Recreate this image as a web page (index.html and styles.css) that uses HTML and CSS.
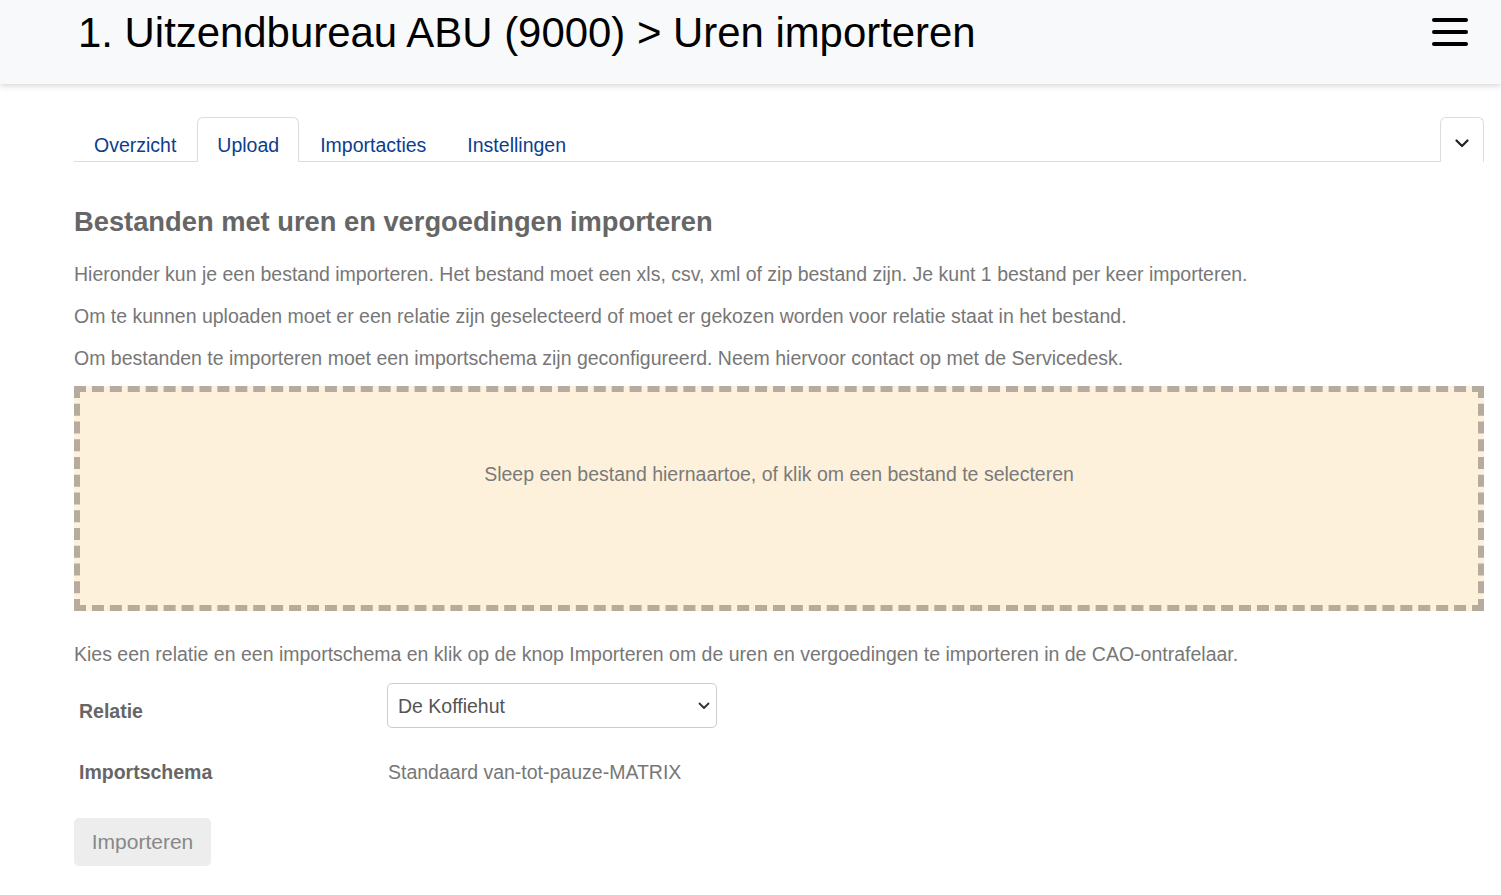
FILE: index.html
```html
<!DOCTYPE html>
<html>
<head>
    <title>Uren importeren</title>
    <link rel="stylesheet" href="styles.css">
</head>
<body>
    <header class="topbar">
        <h1 class="page-title">1. Uitzendbureau ABU (9000) &gt; Uren importeren</h1>
        <button class="menu-toggle" aria-label="Menu">
            <span></span><span></span><span></span>
        </button>
    </header>

    <main class="content">
        <nav class="tabs">
            <ul class="tab-list">
                <li class="tab"><a href="#">Overzicht</a></li>
                <li class="tab active"><a href="#">Upload</a></li>
                <li class="tab"><a href="#">Importacties</a></li>
                <li class="tab"><a href="#">Instellingen</a></li>
            </ul>
            <button class="tab-more" aria-label="Meer">
                <svg width="14" height="9" viewBox="0 0 14 9"><path d="M1.5 1.5 L7 7 L12.5 1.5" fill="none" stroke="#222" stroke-width="2.2" stroke-linecap="round" stroke-linejoin="round"/></svg>
            </button>
        </nav>

        <h2 class="section-title">Bestanden met uren en vergoedingen importeren</h2>

        <p>Hieronder kun je een bestand importeren. Het bestand moet een xls, csv, xml of zip bestand zijn. Je kunt 1 bestand per keer importeren.</p>
        <p>Om te kunnen uploaden moet er een relatie zijn geselecteerd of moet er gekozen worden voor relatie staat in het bestand.</p>
        <p class="last">Om bestanden te importeren moet een importschema zijn geconfigureerd. Neem hiervoor contact op met de Servicedesk.</p>

        <div class="dropzone">Sleep een bestand hiernaartoe, of klik om een bestand te selecteren</div>

        <p class="intro">Kies een relatie en een importschema en klik op de knop Importeren om de uren en vergoedingen te importeren in de CAO-ontrafelaar.</p>

        <form class="import-form">
            <label class="field-label" for="relatie">Relatie</label>
            <div class="select-wrap">
                <select id="relatie">
                    <option selected>De Koffiehut</option>
                </select>
                <svg class="select-arrow" width="12" height="8" viewBox="0 0 12 8"><path d="M1.5 1.5 L6 6 L10.5 1.5" fill="none" stroke="#333" stroke-width="1.8" stroke-linecap="round" stroke-linejoin="round"/></svg>
            </div>

            <div class="field-label">Importschema</div>
            <div class="field-value">Standaard van-tot-pauze-MATRIX</div>
        </form>

        <button class="btn-import" disabled>Importeren</button>
    </main>
</body>
</html>
```

FILE: styles.css
```css
body {
    margin: 0;
    font-family: "Liberation Sans", Arial, sans-serif;
    color: #777;
    background: #fff;
}

.topbar {
    height: 84px;
    background: #f8f9fa;
    box-shadow: 0 2px 6px rgba(0, 0, 0, 0.16);
    display: flex;
    align-items: flex-start;
    justify-content: space-between;
    padding: 0 33px 0 78px;
}

.page-title {
    margin: 0;
    padding-top: 9px;
    font-size: 41.9px;
    font-weight: normal;
    line-height: 48px;
    color: #000;
}

.menu-toggle {
    margin-top: 18px;
    width: 36px;
    height: 28px;
    padding: 0;
    border: 0;
    background: none;
    display: flex;
    flex-direction: column;
    justify-content: space-between;
}

.menu-toggle span {
    display: block;
    height: 4px;
    border-radius: 2px;
    background: #000;
}

.content {
    padding: 33px 17px 0 74px;
}

.tabs {
    display: flex;
    align-items: flex-end;
    border-bottom: 1px solid #dcdcdc;
    height: 44px;
}

.tab-list {
    list-style: none;
    margin: 0;
    padding: 0;
    display: flex;
    flex: 1;
    height: 100%;
}

.tab {
    margin-right: 1px;
}

.tab a {
    display: block;
    height: 44px;
    box-sizing: border-box;
    padding: 15px 19px 0;
    font-size: 19.5px;
    line-height: 24px;
    color: #0d3d8f;
    text-decoration: none;
    border: 1px solid transparent;
    border-bottom: 0;
    border-radius: 6px 6px 0 0;
}

.tab.active a {
    background: #fff;
    border-color: #dcdcdc;
    margin-bottom: -1px;
    height: 45px;
}

.tab-more {
    width: 44px;
    height: 45px;
    margin-bottom: -1px;
    padding: 6px 0 0;
    background: #fff;
    border: 1px solid #dcdcdc;
    border-bottom: 0;
    border-radius: 6px 6px 0 0;
    display: flex;
    align-items: center;
    justify-content: center;
}

.section-title {
    margin: 44px 0 24px;
    font-size: 27.3px;
    line-height: 32px;
    color: #666;
}

p {
    margin: 0 0 18px;
    font-size: 19.5px;
    line-height: 24px;
}

p.last {
    margin-bottom: 16px;
}

.dropzone {
    box-sizing: content-box;
    padding-top: 70px;
    height: 143px;
    border: 6px dashed #b5ac9d;
    background: #fdf1dc;
    text-align: center;
    font-size: 19.5px;
    line-height: 24px;
    color: #7a7a7a;
}

.intro {
    margin-top: 31px;
    margin-bottom: 17px;
}

.import-form {
    display: grid;
    grid-template-columns: 313px 330px;
    row-gap: 32px;
    align-items: start;
}

.field-label {
    padding: 16px 0 0 5px;
    font-size: 19.5px;
    line-height: 24px;
    font-weight: bold;
    color: #666;
}

.import-form div.field-label {
    padding-top: 0;
}

.field-value {
    font-size: 19.5px;
    line-height: 24px;
    color: #777;
    padding-left: 1px;
}

.select-wrap {
    position: relative;
}

.select-wrap select {
    width: 330px;
    height: 45px;
    padding: 0 10px;
    font-family: inherit;
    font-size: 19.5px;
    color: #555;
    border: 1px solid #ccc;
    border-radius: 5px;
    background: #fff;
    appearance: none;
    -webkit-appearance: none;
}

.select-arrow {
    position: absolute;
    right: 7px;
    top: 19px;
    pointer-events: none;
}

.btn-import {
    margin-top: 34px;
    width: 137px;
    height: 48px;
    border: 0;
    border-radius: 5px;
    background: #ededed;
    font-family: inherit;
    font-size: 21px;
    color: #888;
}
```
